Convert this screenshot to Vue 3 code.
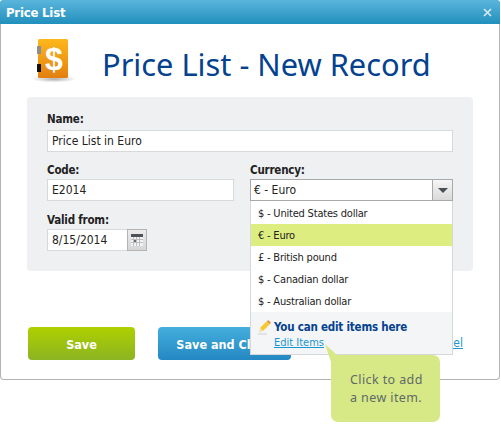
<script setup>
const options = [
  { label: '$ - United States dollar' },
  { label: '€ - Euro', active: true },
  { label: '£ - British pound' },
  { label: '$ - Canadian dollar' },
  { label: '$ - Australian dollar' }
]
</script>

<template>
  <div class="page">
    <div class="window">
      <header class="titlebar">
        <span class="titlebar-text">Price List</span>
        <svg class="close" width="9" height="9" viewBox="0 0 9 9"><path d="M1 1l7 7M8 1L1 8" stroke="#d5e9f3" stroke-width="1.7" fill="none"/></svg>
      </header>
      <div class="heading">
        <svg class="logo" width="46" height="44" viewBox="0 0 46 44">
          <defs>
            <linearGradient id="bookFill" x1="0" y1="0" x2="0" y2="1">
              <stop offset="0" stop-color="#fdb81c"/>
              <stop offset="1" stop-color="#e37f10"/>
            </linearGradient>
            <radialGradient id="shade" cx="0.5" cy="0.5" r="0.5">
              <stop offset="0" stop-color="#777" stop-opacity="0.6"/>
              <stop offset="1" stop-color="#777" stop-opacity="0"/>
            </radialGradient>
          </defs>
          <ellipse cx="23" cy="40" rx="22" ry="3.5" fill="url(#shade)"/>
          <rect x="7" y="0" width="30" height="39" rx="1.500" fill="url(#bookFill)"/>
          <rect x="6" y="7" width="4" height="8" rx="0.500" fill="#8d8d8d"/>
          <rect x="6" y="25" width="4" height="8" rx="0.500" fill="#111"/>
          <text x="23" y="31" text-anchor="middle" class="dollar">$</text>
        </svg>
        <h1 class="title">Price List - New Record</h1>
      </div>
      <section class="panel">
        <div class="field field-name">
          <label class="label">Name:</label>
          <div class="input">Price List in Euro</div>
        </div>
        <div class="columns">
          <div class="col-left">
            <div class="field">
              <label class="label">Code:</label>
              <div class="input">E2014</div>
            </div>
            <div class="field">
              <label class="label">Valid from:</label>
              <div class="date">
                <div class="input date-input">8/15/2014</div>
                <div class="cal-btn">
                  <svg width="12" height="12" viewBox="0 0 12 12">
                    <rect width="12" height="12" fill="#f2f2f2"/>
                    <rect width="12" height="3" fill="#4e5358"/>
                    <path d="M0 5.500h12M0 8.500h12M2.500 3v9M5.500 3v9M8.500 3v9" stroke="#bcbfc1" stroke-width="1"/>
                    <rect x="3" y="6" width="2" height="2" fill="#6a6e71"/>
                  </svg>
                </div>
              </div>
            </div>
          </div>
          <div class="col-right">
            <label class="label">Currency:</label>
            <div class="select">
              <span class="select-value">€ - Euro</span>
              <span class="select-btn"><i class="arrow"></i></span>
            </div>
            <div class="dropdown">
              <div v-for="o in options" :key="o.label" class="option" :class="{ active: o.active }">{{ o.label }}</div>
              <div class="drop-foot">
                <svg class="pencil" width="13" height="15" viewBox="0 0 13 15">
                  <path d="M0 14h9" stroke="#cfcfcf" stroke-width="1"/>
                  <path d="M9 1l3 3-7 7-3-3z" fill="#f6c92f"/>
                  <path d="M9 1l1.300-0.800 2.500 2.500L12 4z" fill="#e8743a"/>
                  <path d="M2 8l3 3-4 1.200z" fill="#f3dcb0"/>
                </svg>
                <div class="foot-text">
                  <strong class="foot-title">You can edit items here</strong>
                  <a class="foot-link">Edit Items</a>
                </div>
              </div>
              <div class="tip">
                <svg class="tip-tail" width="14" height="18" viewBox="0 0 14 18"><path d="M0 0L13 12V18H6z" fill="#d7e887"/></svg>
                <span class="tip-text">Click to add<br>a new item.</span>
              </div>
            </div>
          </div>
        </div>
      </section>
      <footer class="actions">
        <button class="btn btn-green">Save</button>
        <button class="btn btn-blue">Save and Close</button>
        <a class="cancel">Cancel</a>
      </footer>
    </div>
  </div>
</template>

<style>
html, body { margin: 0; background: #fff; }
</style>

<style scoped>
.page { width: 501px; height: 424px; overflow: hidden; }
.window {
  box-sizing: border-box;
  width: 500px;
  height: 380px;
  border: 1px solid #b3b3b3;
  border-top: 0;
  border-radius: 4px;
  font-family: "DejaVu Sans Condensed", "DejaVu Sans", sans-serif;
  font-size: 12px;
  color: #222;
}
.titlebar {
  height: 24px;
  margin: 0 -1px;
  padding: 0 8px 0 6px;
  display: flex;
  align-items: center;
  justify-content: space-between;
  background: linear-gradient(#5bb5dc, #2190bd);
  border-radius: 3px 3px 0 0;
}
.titlebar-text { color: #fff; font-weight: 700; font-size: 13px; letter-spacing: -0.2px; }
.heading {
  display: flex;
  align-items: flex-start;
  height: 73px;
  padding-left: 30px;
  box-sizing: border-box;
  padding-top: 15px;
}
.logo { flex: none; }
.dollar { font-family: "Liberation Sans", sans-serif; font-weight: 700; font-size: 32px; fill: #fff; }
.title {
  margin: 4px 0 0 25px;
  font-family: "Noto Sans", sans-serif;
  font-weight: 400;
  font-size: 30.8px;
  line-height: 42px;
  color: #04428f;
  white-space: nowrap;
}
.panel {
  box-sizing: border-box;
  width: 446px;
  height: 174px;
  margin-left: 26px;
  padding: 13px 20px 0;
  background: #eff0f2;
  border-radius: 4px;
}
.field { display: flex; flex-direction: column; margin-bottom: 10px; }
.field-name { margin-bottom: 9px; }
.field-name .label { margin-bottom: 2px; }
.label { font-weight: 700; font-size: 11.5px; letter-spacing: -0.2px; line-height: 18px; color: #222; }
.col-right .label { display: block; }
.input {
  box-sizing: border-box;
  height: 22px;
  line-height: 21px;
  padding: 0 4px;
  background: #fff;
  border: 1px solid #d7d9db;
  white-space: nowrap;
}
.columns { display: flex; gap: 16px; }
.col-left { width: 187px; flex: none; }
.col-right { width: 203px; flex: none; position: relative; }
.date { display: flex; }
.date-input { width: 80px; border-right: 0; }
.cal-btn {
  box-sizing: border-box;
  width: 20px;
  height: 22px;
  display: flex;
  align-items: center;
  justify-content: center;
  background: linear-gradient(#ececec, #d6d6d6);
  border: 1px solid #b4b4b4;
}
.select {
  box-sizing: border-box;
  height: 22px;
  display: flex;
  background: #fff;
  border: 1px solid #a9a9a9;
}
.select-value { flex: 1; line-height: 21px; padding-left: 3px; }
.select-btn {
  width: 19px;
  display: flex;
  align-items: center;
  justify-content: center;
  border-left: 1px solid #a9a9a9;
  background: linear-gradient(#f6f6f6, #d9d9d9);
}
.arrow {
  width: 0;
  height: 0;
  border: 5px solid transparent;
  border-top: 5px solid #4a4f54;
  border-bottom: 0;
}
.dropdown {
  position: absolute;
  left: 0;
  top: 40px;
  width: 203px;
  box-sizing: border-box;
  padding-top: 1px;
  background: #fff;
  border: 1px solid #d5d7d9;
  border-top: 0;
  height: 154px;
  z-index: 2;
}
.option { height: 22px; line-height: 23px; padding-left: 7px; font-size: 11px; letter-spacing: -0.2px; white-space: nowrap; }
.option.active { background: #dded80; }
.drop-foot {
  box-sizing: border-box;
  height: 42px;
  background: #f4f5f7;
  display: flex;
  padding: 8px 0 0 7px;
  gap: 3px;
}
.pencil { flex: none; }
.foot-text { display: flex; flex-direction: column; align-items: flex-start; }
.foot-title { color: #04428f; font-weight: 700; font-size: 11.5px; letter-spacing: -0.2px; line-height: 15px; }
.foot-link { color: #1b96d2; text-decoration: underline; font-size: 11px; line-height: 15px; }
.tip {
  position: absolute;
  left: 80px;
  top: 154px;
  box-sizing: border-box;
  width: 109px;
  height: 67px;
  padding: 16px 0 0 19px;
  background: #d7e887;
  border-radius: 7px;
  color: #5f6a66;
  font-family: "Noto Sans", sans-serif;
  font-size: 12.5px;
  line-height: 18px;
  letter-spacing: 0.4px;
  white-space: nowrap;
}
.tip-text { display: block; }
.tip-tail { position: absolute; left: -6px; top: -11px; }
.actions {
  display: flex;
  align-items: flex-start;
  padding: 56px 0 0 27px;
  position: relative;
}
.btn {
  border: 0;
  height: 33px;
  border-radius: 4px;
  color: #fff;
  font-family: inherit;
  font-weight: 700;
  font-size: 12.5px;
  padding: 1px 0 0;
}
.btn-green { width: 107px; background: linear-gradient(#afd000, #8bb422); }
.btn-blue { width: 133px; margin-left: 23px; background: linear-gradient(#44aedd, #2488c2); }
.cancel {
  position: absolute;
  right: 36px;
  top: 65px;
  color: #1b96d2;
  text-decoration: underline;
  line-height: 15px;
}
</style>
